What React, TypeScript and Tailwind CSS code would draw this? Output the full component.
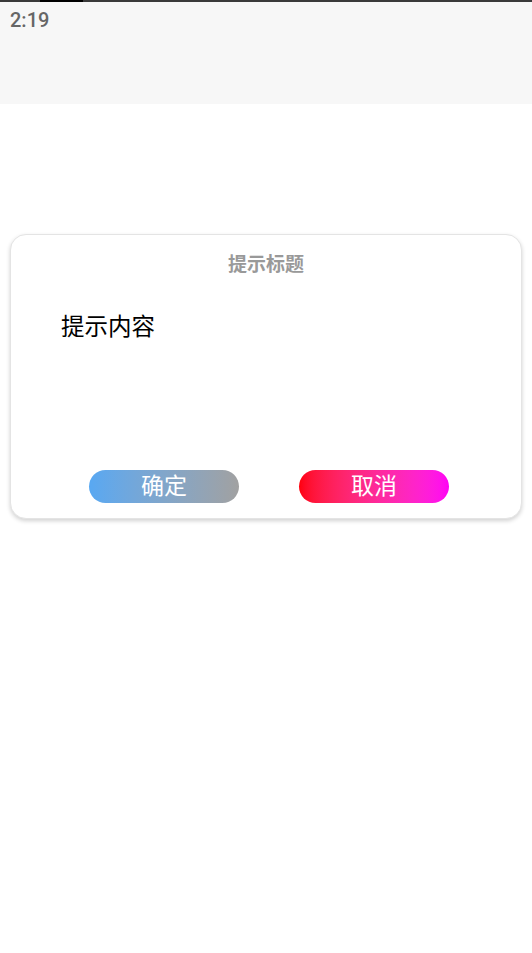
import React from "react";

export default function App() {
  const cjk = { fontFamily: '"Noto Sans CJK SC", "Noto Sans", sans-serif' };
  return (
    <div className="min-h-[953px] w-[532px] bg-white" style={cjk}>
      <div className="h-[104px] bg-[#f7f7f7] flex flex-col">
        <div className="h-[2px] bg-[#3a3a3a] flex">
          <div className="ml-[40px] w-[43px] h-[2px] bg-black" />
        </div>
        <div
          className="pl-[10px] pt-[6px] text-[20px] leading-[24px] font-medium text-[#666666]"
          style={{ fontFamily: 'Roboto, "Noto Sans", sans-serif' }}
        >
          2:19
        </div>
      </div>
      <div className="mt-[130px] mx-[10px] h-[285px] rounded-[16px] border border-[#e4e4e4] bg-white shadow-[0_2px_4px_rgba(0,0,0,0.18)] flex flex-col">
        <div className="pt-[14px] text-center text-[19px] leading-[28px] font-bold text-[#999999]">
          提示标题
        </div>
        <div className="pl-[50px] pt-[32px] text-[23.5px] leading-[32px] text-black">
          提示内容
        </div>
        <div className="mt-auto mb-[15px] flex justify-between pl-[78px] pr-[72px]">
          <button className="w-[150px] h-[33px] rounded-full bg-gradient-to-r from-[#58a8f2] to-[#a1a1a1] text-white text-[23px] leading-[29px] pb-[4px]">
            确定
          </button>
          <button className="w-[150px] h-[33px] rounded-full bg-gradient-to-r from-[#ff0008] to-[#ff00f4] text-white text-[23px] leading-[29px] pb-[4px]">
            取消
          </button>
        </div>
      </div>
    </div>
  );
}
